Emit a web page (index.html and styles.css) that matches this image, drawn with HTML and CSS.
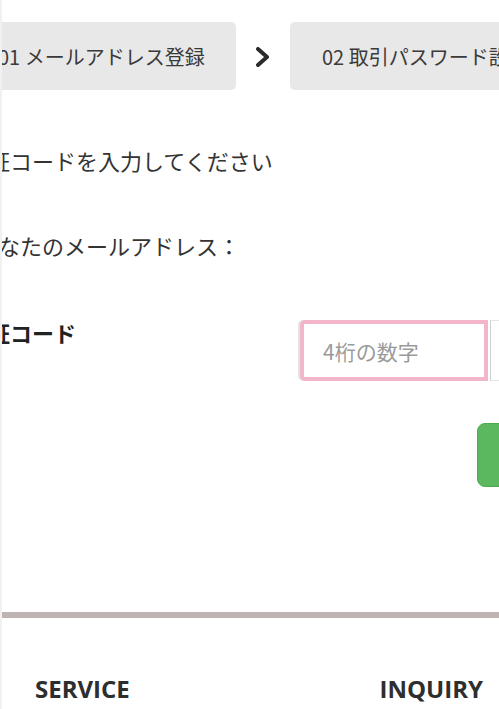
FILE: index.html
```html
<!DOCTYPE html>
<html lang="ja">
<head>
  <meta charset="UTF-8">
  <meta name="viewport" content="width=device-width, initial-scale=1.0">
  <title>認証コード入力</title>
  <link rel="stylesheet" href="styles.css">
</head>
<body>
  <div class="main">
    <div class="steps">
      <div class="step">01 メールアドレス登録</div>
      <div class="step-arrow">
        <svg width="16" height="20" viewBox="0 0 16 20">
          <polyline points="3,2 12,10 3,18" fill="none" stroke="#2b2b2b" stroke-width="4" stroke-linecap="round" stroke-linejoin="round"/>
        </svg>
      </div>
      <div class="step">02 取引パスワード設定</div>
    </div>

    <p class="lead">認証コードを入力してください</p>
    <p class="mail">あなたのメールアドレス：</p>

    <div class="form-row">
      <label class="form-label" for="code">認証コード</label>
      <div class="input-group">
        <input id="code" class="code-input" type="text" placeholder="4桁の数字">
        <span class="addon"></span>
      </div>
    </div>

    <div class="actions">
      <button class="btn-next" type="button"></button>
    </div>
  </div>

  <footer class="footer">
    <a class="footer-link" href="#">SERVICE</a>
    <a class="footer-link" href="#">INQUIRY</a>
  </footer>
</body>
</html>
```

FILE: styles.css
```css
html, body {
  margin: 0;
  padding: 0;
}

body {
  width: 499px;
  height: 709px;
  overflow: hidden;
  background-color: #fff;
  border-left: 2px solid #f1f1f1;
  box-sizing: border-box;
  font-family: "Noto Sans CJK JP", "Noto Sans", sans-serif;
  color: #333;
}

.main {
  margin-left: -36px;
  width: 700px;
}

.steps {
  display: flex;
  align-items: center;
  padding-top: 22px;
}

.step {
  width: 270px;
  height: 68px;
  box-sizing: border-box;
  padding: 0 32px;
  display: flex;
  align-items: center;
  background-color: #e8e8e8;
  border-radius: 5px;
  font-size: 20px;
  color: #3a3a3a;
  white-space: nowrap;
  flex-shrink: 0;
}

.step-arrow {
  width: 54px;
  display: flex;
  justify-content: center;
  padding-top: 2px;
}

.lead,
.mail {
  margin: 0;
  font-size: 22px;
  line-height: 30px;
  color: #333;
}

.lead {
  margin-top: 55px;
}

.mail {
  margin-top: 55px;
  padding-left: 10px;
}

.form-row {
  display: flex;
  align-items: flex-start;
  margin-top: 57px;
}

.form-label {
  width: 334px;
  box-sizing: border-box;
  font-size: 22px;
  line-height: 30px;
  font-weight: bold;
  color: #222;
}

.input-group {
  display: flex;
  margin-top: 3px;
  height: 61px;
}

.code-input {
  width: 188px;
  height: 61px;
  box-sizing: border-box;
  margin: 0;
  padding: 0 19px;
  border: 4px solid #f3b5c9;
  border-radius: 5px 0 0 5px;
  box-shadow: -2px 0 0 0 #e4e4e4;
  font-family: "Noto Sans CJK JP", sans-serif;
  font-size: 21px;
  color: #333;
  background: #fff;
  outline: none;
}

.code-input::placeholder {
  color: #9a9a9a;
}

.addon {
  width: 80px;
  margin-left: 2px;
  border-left: 1px solid #cfcfcf;
  border-top: 1px solid #e6e6e6;
  border-bottom: 1px solid #e6e6e6;
}

.actions {
  margin-top: 42px;
  padding-left: 511px;
}

.btn-next {
  display: block;
  width: 160px;
  height: 64px;
  border: 1px solid #4caa4f;
  border-radius: 8px;
  background-color: #5cb85f;
  cursor: pointer;
}

.footer {
  margin-top: 125px;
  border-top: 6px solid #bfb4b1;
  display: flex;
  justify-content: space-between;
  padding: 56px 16px 0 33px;
}

.footer-link {
  font-family: "Open Sans", "Noto Sans", sans-serif;
  font-size: 24px;
  font-weight: bold;
  line-height: 30px;
  color: #2e2e2e;
  text-decoration: none;
}
```
